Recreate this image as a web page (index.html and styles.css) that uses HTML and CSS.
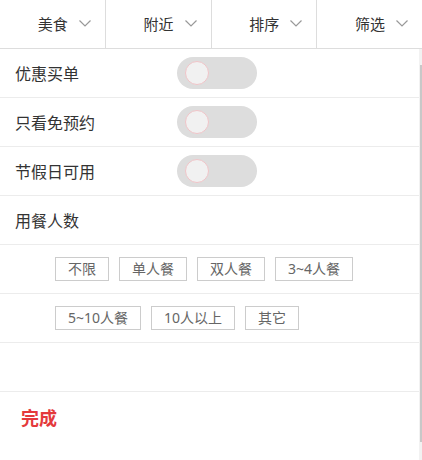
FILE: index.html
```html
<!DOCTYPE html>
<html lang="zh-CN">
  <head>
    <meta charset="UTF-8" />
    <title>筛选</title>
    <link rel="stylesheet" href="styles.css">
  </head>
  <body>
    <div class="tabs">
      <div class="tab"><span>美食</span><svg class="arrow" viewBox="0 0 12 7"><path d="M0.5 0.5 L6 6 L11.5 0.5" /></svg></div>
      <div class="tab"><span>附近</span><svg class="arrow" viewBox="0 0 12 7"><path d="M0.5 0.5 L6 6 L11.5 0.5" /></svg></div>
      <div class="tab"><span>排序</span><svg class="arrow" viewBox="0 0 12 7"><path d="M0.5 0.5 L6 6 L11.5 0.5" /></svg></div>
      <div class="tab"><span>筛选</span><svg class="arrow" viewBox="0 0 12 7"><path d="M0.5 0.5 L6 6 L11.5 0.5" /></svg></div>
    </div>

    <div class="panel">
      <div class="list">
        <div class="row">
          <label>优惠买单</label>
          <div class="switch"><div class="knob"></div></div>
        </div>
        <div class="row">
          <label>只看免预约</label>
          <div class="switch"><div class="knob"></div></div>
        </div>
        <div class="row">
          <label>节假日可用</label>
          <div class="switch"><div class="knob"></div></div>
        </div>
        <div class="row">
          <label>用餐人数</label>
        </div>
        <div class="row tags">
          <span class="tag">不限</span>
          <span class="tag">单人餐</span>
          <span class="tag">双人餐</span>
          <span class="tag">3~4人餐</span>
        </div>
        <div class="row tags">
          <span class="tag">5~10人餐</span>
          <span class="tag">10人以上</span>
          <span class="tag">其它</span>
        </div>
        <div class="row"></div>
        <div class="footer">
          <span class="done">完成</span>
        </div>
      </div>
      <div class="scrollbar"><div class="thumb"></div></div>
    </div>
  </body>
</html>
```

FILE: styles.css
```css
body {
  margin: 0;
  width: 422px;
  height: 460px;
  overflow: hidden;
  background: #fff;
  font-family: "Noto Sans CJK SC", "Noto Sans", sans-serif;
  color: #333;
}
.tabs {
  display: flex;
  height: 48px;
  border-bottom: 1px solid #ddd;
}
.tab {
  flex: 1;
  display: flex;
  align-items: center;
  justify-content: flex-end;
  gap: 11px;
  padding-right: 14px;
  border-right: 1px solid #ddd;
  font-size: 15px;
  line-height: 20px;
}
.tab:last-child {
  border-right: none;
}
.arrow {
  width: 12px;
  height: 7px;
  margin-top: -2px;

  path {
    fill: none;
    stroke: #999;
    stroke-width: 1.2;
  }
}
.panel {
  display: flex;
  height: 411px;
}
.list {
  flex: 1;
}
.row {
  display: flex;
  align-items: center;
  height: 48px;
  padding-left: 15px;
  border-bottom: 1px solid #ececec;
  font-size: 16px;

  label {
    width: 162px;
    line-height: 20px;
  }
}
.switch {
  width: 80px;
  height: 32px;
  border-radius: 16px;
  background: #ddd;
  display: flex;
  align-items: center;
  padding-left: 8px;
  box-sizing: border-box;
}
.knob {
  width: 22px;
  height: 22px;
  border-radius: 50%;
  background: #f1f1f1;
  border: 1px solid #f0c4c8;
}
.tags {
  padding-left: 55px;
  gap: 10px;
}
.tag {
  height: 22px;
  line-height: 22px;
  padding: 0 12px;
  border: 1px solid #ccc;
  font-family: "Noto Sans", "Noto Sans CJK SC", sans-serif;
  font-size: 14px;
  color: #666;
}
.footer {
  height: 50px;
  display: flex;
  align-items: center;
  padding-left: 21px;
}
.done {
  color: #e4393c;
  font-size: 18px;
  font-weight: bold;
  line-height: 22px;
}
.scrollbar {
  width: 3px;
  background: #f2f2f2;
}
.thumb {
  width: 2px;
  margin: 16px 0 0 1px;
  height: 377px;
  background: #c8c8c8;
}
```
